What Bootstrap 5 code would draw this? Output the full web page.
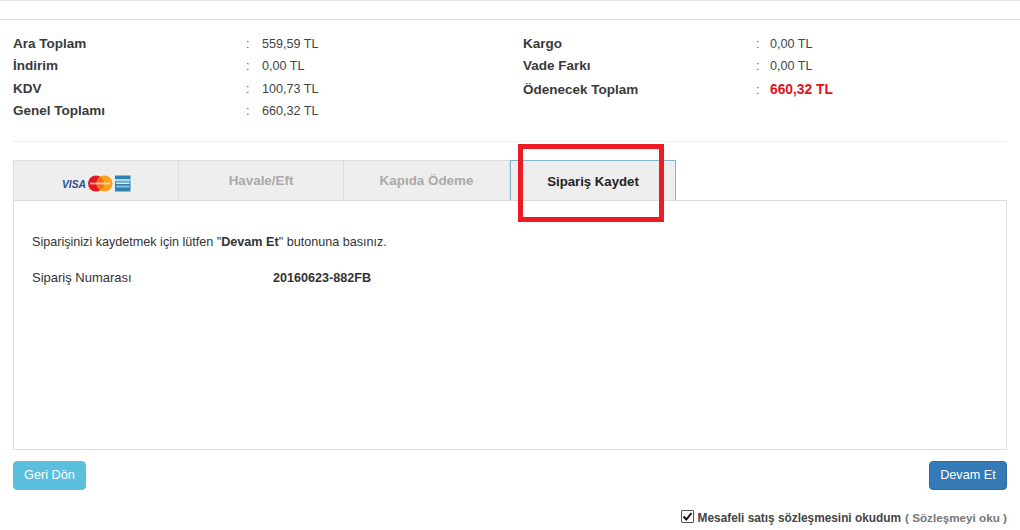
<!DOCTYPE html>
<html lang="tr">
<head>
<meta charset="utf-8">
<title>Sipariş Kaydet</title>
<link href="https://cdn.jsdelivr.net/npm/bootstrap@5.3.0/dist/css/bootstrap.min.css" rel="stylesheet">
<script src="https://cdn.jsdelivr.net/npm/bootstrap@5.3.0/dist/js/bootstrap.bundle.min.js"></script>
<style>
html,body{height:530px;overflow:hidden}
body{font-family:"Liberation Sans",Arial,sans-serif;font-size:12.6px;color:#333;background:#fff;position:relative}
.top-rule{height:20px;border-top:1px solid #e6e6e6;border-bottom:1px solid #e0e0e0}
.wrap{width:994px;margin-left:13px}
.sum-area{height:122px;border-bottom:1px solid #eee;padding-top:13px}
.sum-col{flex:0 0 auto;width:510px}
.sum-col.second{width:484px}
.sum-row{display:flex;height:22.33px;line-height:22px;font-size:12.6px}
.sum-row.lower{line-height:24px}
.sum-lab{width:233px;font-weight:700;font-size:13.5px;color:#3a3a3a}
.sum-sep{width:16px;color:#666}
.sum-col.second .sum-sep{width:14px}
.sum-val{color:#444}
.sum-total{color:#e2111b;font-weight:700;font-size:13.8px}
.tabs-row{margin-top:18px;height:40px;display:flex}
.tab-item{flex:0 0 auto;width:166px;height:40px;background:#eee;border:1px solid #ddd;border-left-width:0;border-bottom:0;display:flex;align-items:center;justify-content:center;padding-top:2px;font-weight:700;font-size:13.4px;color:#aaa}
.tab-item:first-child{border-left-width:1px}
.tab-item:nth-child(2){width:165px}
.tab-item.tab-on{color:#222;font-size:13.2px;border:1px solid #7fb5cf;border-bottom:0}
.tab-logo{display:block;margin-top:3px}
.pane{height:250px;border:1px solid #ddd;padding:33px 18px 0;font-size:12.6px;line-height:16px;color:#333}
.pane-num{display:flex;margin-top:20px}
.pane-lab{width:241px;font-size:13px}
.pane-val{font-weight:700}
.foot-btns{margin-top:11px}
.btn-geri,.btn-devam{font-size:12.7px;color:#fff;padding:0;height:29px;line-height:27px;border-radius:4px}
.btn-geri{width:73px;background:#5bc0de;border:1px solid #5bc0de}
.btn-devam{width:78px;background:#337ab7;border:1px solid #2e6da4}
.agree{margin-top:20px;font-size:11.85px;line-height:16px;font-weight:700;color:#444;gap:4px}
.agree input{appearance:none;-webkit-appearance:none;flex:0 0 auto;margin:0;width:13px;height:13px;border:1px solid #555;border-radius:1px;background:#fff url("data:image/svg+xml,%3Csvg xmlns='http://www.w3.org/2000/svg' viewBox='0 0 11 11'%3E%3Cpath d='M1.500 5.500 4.300 8.500 9.500 2' fill='none' stroke='%23111' stroke-width='2'/%3E%3C/svg%3E") center/11px 11px no-repeat}
.agree-link{color:#777;font-size:11.7px}
.callout{position:absolute;left:518px;top:144px;width:146px;height:78px;border:5px solid #ec1c24;pointer-events:none}
</style>
</head>
<body>
<div class="top-rule"></div>
<div class="wrap">
  <div class="sum-area d-flex">
    <div class="sum-col">
      <div class="sum-row"><div class="sum-lab">Ara Toplam</div><div class="sum-sep">:</div><div class="sum-val">559,59 TL</div></div>
      <div class="sum-row"><div class="sum-lab">İndirim</div><div class="sum-sep">:</div><div class="sum-val">0,00 TL</div></div>
      <div class="sum-row"><div class="sum-lab">KDV</div><div class="sum-sep">:</div><div class="sum-val">100,73 TL</div></div>
      <div class="sum-row"><div class="sum-lab">Genel Toplamı</div><div class="sum-sep">:</div><div class="sum-val">660,32 TL</div></div>
    </div>
    <div class="sum-col second">
      <div class="sum-row"><div class="sum-lab">Kargo</div><div class="sum-sep">:</div><div class="sum-val">0,00 TL</div></div>
      <div class="sum-row"><div class="sum-lab">Vade Farkı</div><div class="sum-sep">:</div><div class="sum-val">0,00 TL</div></div>
      <div class="sum-row lower"><div class="sum-lab">Ödenecek Toplam</div><div class="sum-sep">:</div><div class="sum-total">660,32 TL</div></div>
    </div>
  </div>
  <div class="tabs-row">
    <div class="tab-item">
      <svg class="tab-logo" width="70" height="17" viewBox="0 0 70 17" role="img" aria-label="Visa MasterCard American Express">
        <text x="1" y="12.500" font-family="Liberation Sans, sans-serif" font-size="11" font-weight="700" font-style="italic" fill="#2a4f8f" textLength="24" lengthAdjust="spacingAndGlyphs">VISA</text>
        <circle cx="35" cy="8.500" r="8" fill="#e2171f"/>
        <circle cx="43.500" cy="8.500" r="8" fill="#f7a11d"/>
        <path d="M39.250 1.700a8 8 0 0 1 0 13.600 8 8 0 0 1 0-13.600z" fill="#f2701c"/>
        <rect x="29" y="7.600" width="20" height="1.800" fill="#fff" fill-opacity=".6"/>
        <rect x="54" y="0.500" width="15.500" height="16" fill="#2b82b3"/>
        <rect x="54" y="4" width="15.500" height="2.500" fill="#a9d6ea"/>
        <rect x="55" y="7.500" width="13.500" height="1.500" fill="#d8edf5"/>
        <rect x="55" y="10.500" width="13.500" height="2" fill="#86c0db"/>
      </svg>
    </div>
    <div class="tab-item">Havale/Eft</div>
    <div class="tab-item">Kapıda Ödeme</div>
    <div class="tab-item tab-on">Sipariş Kaydet</div>
  </div>
  <div class="pane">
    <div>Siparişinizi kaydetmek için lütfen "<b>Devam Et</b>" butonuna basınız.</div>
    <div class="pane-num"><div class="pane-lab">Sipariş Numarası</div><div class="pane-val">20160623-882FB</div></div>
  </div>
  <div class="d-flex justify-content-between foot-btns">
    <button type="button" class="btn btn-geri">Geri Dön</button>
    <button type="button" class="btn btn-devam">Devam Et</button>
  </div>
  <div class="agree d-flex justify-content-end align-items-start">
    <input type="checkbox" checked aria-label="Mesafeli satış sözleşmesini okudum">
    <span>Mesafeli satış sözleşmesini okudum</span>
    <span class="agree-link">( Sözleşmeyi oku )</span>
  </div>
</div>
<div class="callout"></div>
</body>
</html>
